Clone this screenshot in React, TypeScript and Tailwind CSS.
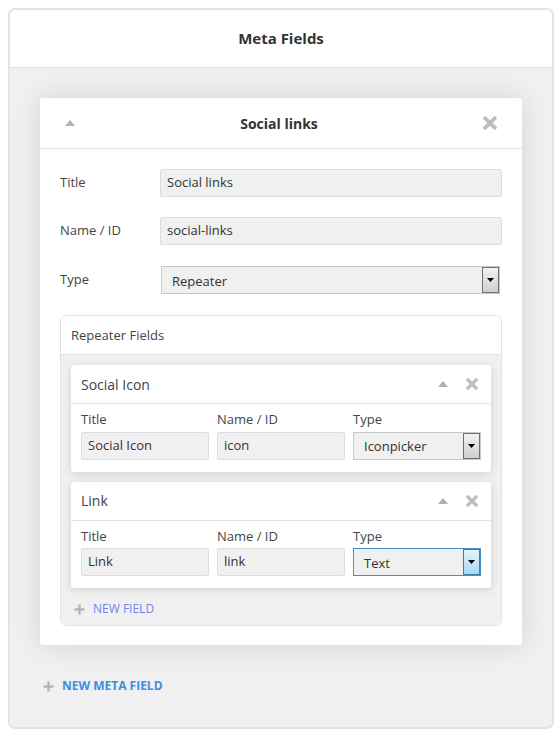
import React from 'react';

const font = { fontFamily: '"Open Sans", "Noto Sans", sans-serif' };

function Caret() {
  return (
    <svg width="10" height="6" viewBox="0 0 10 6">
      <path d="M5 0 L10 6 L0 6 Z" fill="#b0b0b0" />
    </svg>
  );
}

function Cross({ size = 13 }: { size?: number }) {
  return (
    <svg width={size} height={size} viewBox="0 0 12 12">
      <path d="M2 2 L10 10 M10 2 L2 10" stroke="#bdbdbd" strokeWidth="3.2" strokeLinecap="square" />
    </svg>
  );
}

function Plus() {
  return (
    <svg width="11" height="11" viewBox="0 0 11 11">
      <path d="M5.5 0.5 V10.5 M0.5 5.5 H10.5" stroke="#b5b5b5" strokeWidth="2.4" />
    </svg>
  );
}

function Select({ value, focus = false, className = '' }: { value: string; focus?: boolean; className?: string }) {
  return (
    <div
      className={`flex h-[28px] items-stretch border bg-[#f0f0f0] ${focus ? 'border-[#4a8bc4]' : 'border-[#c8c8c8]'} ${className}`}
    >
      <div className="flex flex-1 items-center pl-[10px] pt-[3px] text-[13px] text-[#333]">{value}</div>
      <div
        className={`flex w-[17px] items-center justify-center border ${
          focus
            ? 'border-[#3c7fb1] bg-gradient-to-b from-[#e5f4fc] to-[#a7d9f5]'
            : 'border-[#707070] bg-gradient-to-b from-[#f2f2f2] to-[#d0d0d0]'
        }`}
      >
        <svg width="7" height="4" viewBox="0 0 7 4">
          <path d="M0 0 L7 0 L3.5 4 Z" fill="#000" />
        </svg>
      </div>
    </div>
  );
}

function Input({ value }: { value: string }) {
  return (
    <div className="flex h-[28px] items-center rounded-[2px] border border-[#dcdcdc] bg-[#f0f0f0] px-[6px] text-[13px] text-[#333]">
      {value}
    </div>
  );
}

function SubField({ name, id, type, focus }: { name: string; id: string; type: string; focus?: boolean }) {
  return (
    <div className="rounded-[3px] bg-white shadow-[0_2px_8px_rgba(0,0,0,0.13)]">
      <div className="flex h-[39px] items-center justify-between border-b border-[#e2e2e2] px-[10px]">
        <span className="text-[14px] text-[#444]">{name}</span>
        <div className="flex items-center gap-[18px] pr-[3px]">
          <Caret />
          <Cross size={12} />
        </div>
      </div>
      <div className="grid grid-cols-3 gap-x-[8px] px-[10px] pb-[12px] pt-[6px]">
        <div>
          <div className="mb-[2px] text-[13px] text-[#444]">Title</div>
          <Input value={name} />
        </div>
        <div>
          <div className="mb-[2px] text-[13px] text-[#444]">Name / ID</div>
          <Input value={id} />
        </div>
        <div>
          <div className="mb-[2px] text-[13px] text-[#444]">Type</div>
          <Select value={type} focus={focus} className="mt-[1px]" />
        </div>
      </div>
    </div>
  );
}

export default function App() {
  return (
    <div className="h-[738px] w-[560px] bg-white p-[8px]" style={font}>
      <div className="h-[721px] w-[546px] overflow-hidden rounded-[7px] border-2 border-[#e3e3e3] bg-[#f0f0f0]">
        <div className="flex h-[58px] items-center justify-center border-b border-[#e0e0e0] bg-white">
          <h1 className="text-[15px] font-bold text-[#333]">Meta Fields</h1>
        </div>

        <div className="px-[30px] pt-[30px]">
          <div className="rounded-[3px] bg-white shadow-[0_0_28px_rgba(0,0,0,0.12)]">
            <div className="flex h-[51px] items-center justify-between border-b border-[#e2e2e2] px-[25px]">
              <Caret />
              <span className="text-[14px] font-bold text-[#333]">Social links</span>
              <Cross size={14} />
            </div>

            <div className="px-[20px] pb-[19px] pt-[20px]">
              <div className="flex items-center">
                <label className="w-[100px] text-[13px] text-[#444]">Title</label>
                <div className="flex-1"><Input value="Social links" /></div>
              </div>
              <div className="mt-[20px] flex items-center">
                <label className="w-[100px] text-[13px] text-[#444]">Name / ID</label>
                <div className="flex-1"><Input value="social-links" /></div>
              </div>
              <div className="mt-[21px] flex items-center">
                <label className="w-[100px] text-[13px] text-[#444]">Type</label>
                <Select value="Repeater" className="ml-[1px] mr-[2px] flex-1" />
              </div>

              <div className="mt-[21px] overflow-hidden rounded-[6px] border border-[#e3e3e3]">
                <div className="flex h-[39px] items-center border-b border-[#e2e2e2] bg-white px-[10px] pt-[2px] text-[13px] text-[#444]">
                  Repeater Fields
                </div>
                <div className="flex flex-col gap-[10px] bg-[#f0f0f0] px-[10px] pt-[10px]">
                  <SubField name="Social Icon" id="icon" type="Iconpicker" />
                  <SubField name="Link" id="link" type="Text" focus />
                </div>
                <div className="flex h-[37px] items-start gap-[8px] bg-[#f0f0f0] px-[13px] pt-[13px]">
                  <span className="mt-[3px]"><Plus /></span>
                  <span className="text-[12px] leading-[16px] text-[#6d87e8]">NEW FIELD</span>
                </div>
              </div>
            </div>
          </div>

          <div className="mt-[33px] flex items-center gap-[8px] pl-[3px]">
            <Plus />
            <span className="text-[12px] font-bold leading-[16px] text-[#3b8ee6]">NEW META FIELD</span>
          </div>
        </div>
      </div>
    </div>
  );
}
